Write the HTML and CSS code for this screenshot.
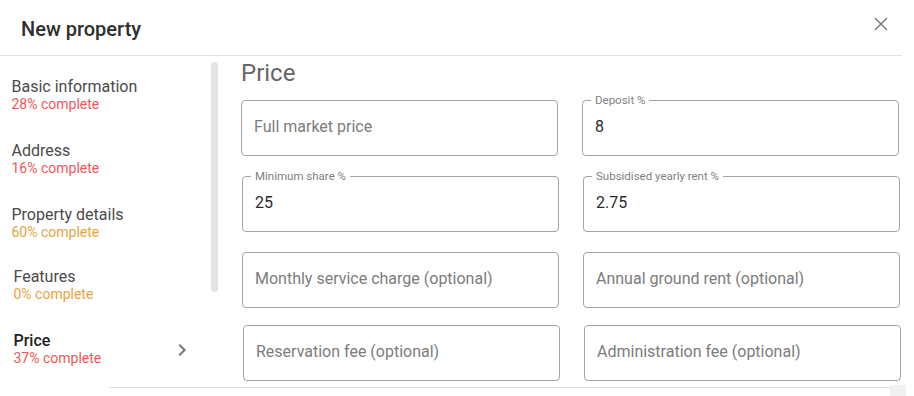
FILE: index.html
```html
<!DOCTYPE html>
<html lang="en">
<head>
    <meta charset="UTF-8">
    <title>New property</title>
    <meta name="viewport" content="width=device-width, initial-scale=1" />

    <link rel="stylesheet" href="styles.css">
</head>
<body>
    <div class="dialogHeader">
        <h2 class="dialogTitle">New property</h2>
        <button class="closeButton" aria-label="Close">
            <svg width="14" height="14" viewBox="0 0 14 14">
                <path d="M1 1L13 13M13 1L1 13" stroke="#757575" stroke-width="1.4" fill="none"/>
            </svg>
        </button>
    </div>
    <div class="dialogBody">
        <div class="sideNav">
            <div class="navList">
                <div class="navItem">
                    <div>
                        <div class="navTitle">Basic information</div>
                        <div class="navProgress low">28% complete</div>
                    </div>
                </div>
                <div class="navItem">
                    <div>
                        <div class="navTitle">Address</div>
                        <div class="navProgress low">16% complete</div>
                    </div>
                </div>
                <div class="navItem">
                    <div>
                        <div class="navTitle">Property details</div>
                        <div class="navProgress mid">60% complete</div>
                    </div>
                </div>
                <div class="navItem shifted features">
                    <div>
                        <div class="navTitle">Features</div>
                        <div class="navProgress mid">0% complete</div>
                    </div>
                </div>
                <div class="navItem shifted active">
                    <div>
                        <div class="navTitle">Price</div>
                        <div class="navProgress low">37% complete</div>
                    </div>
                    <svg class="chevron" width="24" height="24" viewBox="0 0 24 24">
                        <path d="M10 6L8.59 7.41 13.17 12l-4.58 4.59L10 18l6-6z" fill="#757575"/>
                    </svg>
                </div>
            </div>
            <div class="scrollThumb"></div>
        </div>
        <div class="formContent">
            <h3 class="sectionTitle">Price</h3>
            <div class="fieldRow">
                <div class="field">
                    <input type="text" placeholder="Full market price">
                </div>
                <div class="field">
                    <label class="floatLabel">Deposit %</label>
                    <input type="text" value="8">
                </div>
            </div>
            <div class="fieldRow nudge1">
                <div class="field">
                    <label class="floatLabel">Minimum share %</label>
                    <input type="text" value="25">
                </div>
                <div class="field">
                    <label class="floatLabel">Subsidised yearly rent %</label>
                    <input type="text" value="2.75">
                </div>
            </div>
            <div class="fieldRow nudge1">
                <div class="field">
                    <input type="text" placeholder="Monthly service charge (optional)">
                </div>
                <div class="field">
                    <input type="text" placeholder="Annual ground rent (optional)">
                </div>
            </div>
            <div class="fieldRow nudge2 tight">
                <div class="field">
                    <input type="text" placeholder="Reservation fee (optional)">
                </div>
                <div class="field">
                    <input type="text" placeholder="Administration fee (optional)">
                </div>
            </div>
        </div>
    </div>
    <div class="dialogFooter">
        <div class="footerLine"></div>
        <div class="scrollCorner"></div>
    </div>
</body>
</html>
```

FILE: styles.css
```css
body {
    margin: 0;
    background: #fff;
    color: #212121;
    font-family: Roboto, 'Liberation Sans', sans-serif;
    overflow: hidden;
}

.dialogHeader {
    display: flex;
    justify-content: space-between;
    align-items: flex-start;
    width: 902px;
    height: 55px;
    border-bottom: 1px solid #e0e0e0;
}

.dialogTitle {
    margin: 0;
    padding: 17px 0 0 21px;
    font-size: 20px;
    line-height: 24px;
    font-weight: 500;
    color: #2e2e2e;
}

.closeButton {
    margin: 17px 14px 0 0;
    padding: 0;
    border: 0;
    background: none;
    width: 14px;
    height: 14px;
    display: block;
}

.closeButton svg {
    display: block;
}

.dialogBody {
    display: flex;
    height: 329px;
}

.sideNav {
    display: flex;
    width: 218px;
}

.navList {
    width: 211px;
    padding-top: 22px;
}

.navItem {
    display: flex;
    align-items: center;
    justify-content: space-between;
    padding-left: 11.5px;
    padding-right: 17px;
    margin-bottom: 29px;
}

.navItem.shifted {
    padding-left: 13.5px;
}

.navItem.features {
    margin-top: -2px;
}

.navTitle {
    font-size: 16px;
    line-height: 18px;
    color: #4a4a4a;
}

.navItem.active .navTitle {
    font-weight: 500;
    color: #212121;
}

.navProgress {
    font-size: 14px;
    line-height: 17px;
}

.navProgress.low {
    color: #f25757;
}

.navProgress.mid {
    color: #e8a33c;
}

.chevron {
    display: block;
}

.scrollThumb {
    width: 7px;
    height: 230px;
    margin-top: 6px;
    border-radius: 4px;
    background: #e4e4e4;
}

.formContent {
    padding: 3px 0 0 23px;
}

.sectionTitle {
    margin: 0 0 13px 0;
    font-size: 24px;
    line-height: 28px;
    font-weight: 400;
    color: #666;
}

.fieldRow {
    display: flex;
    gap: 24px;
    margin-bottom: 20px;
}

.fieldRow.nudge1 {
    padding-left: 1px;
}

.fieldRow.nudge2 {
    padding-left: 2px;
}

.fieldRow.tight {
    margin-top: -3px;
}

.field {
    position: relative;
    box-sizing: border-box;
    width: 317px;
    height: 56px;
    border: 1px solid #a3a3a3;
    border-radius: 4px;
}

.floatLabel {
    position: absolute;
    top: -7px;
    left: 8px;
    padding: 0 4px;
    background: #fff;
    font-size: 11.5px;
    line-height: 13px;
    color: #808080;
}

.field input {
    box-sizing: border-box;
    width: 100%;
    height: 100%;
    border: 0;
    outline: none;
    background: transparent;
    padding: 0 12px 3px 12px;
    font-family: Roboto, 'Liberation Sans', sans-serif;
    font-size: 16px;
    color: #2b2b2b;
}

.field input::placeholder {
    color: #7c7c7c;
}

.dialogFooter {
    display: flex;
    align-items: flex-start;
    padding-left: 109px;
    height: 11px;
}

.footerLine {
    width: 781px;
    height: 1px;
    margin-top: 2px;
    background: #e0e0e0;
}

.scrollCorner {
    width: 16px;
    height: 11px;
    background: #f1f1f1;
}
```
